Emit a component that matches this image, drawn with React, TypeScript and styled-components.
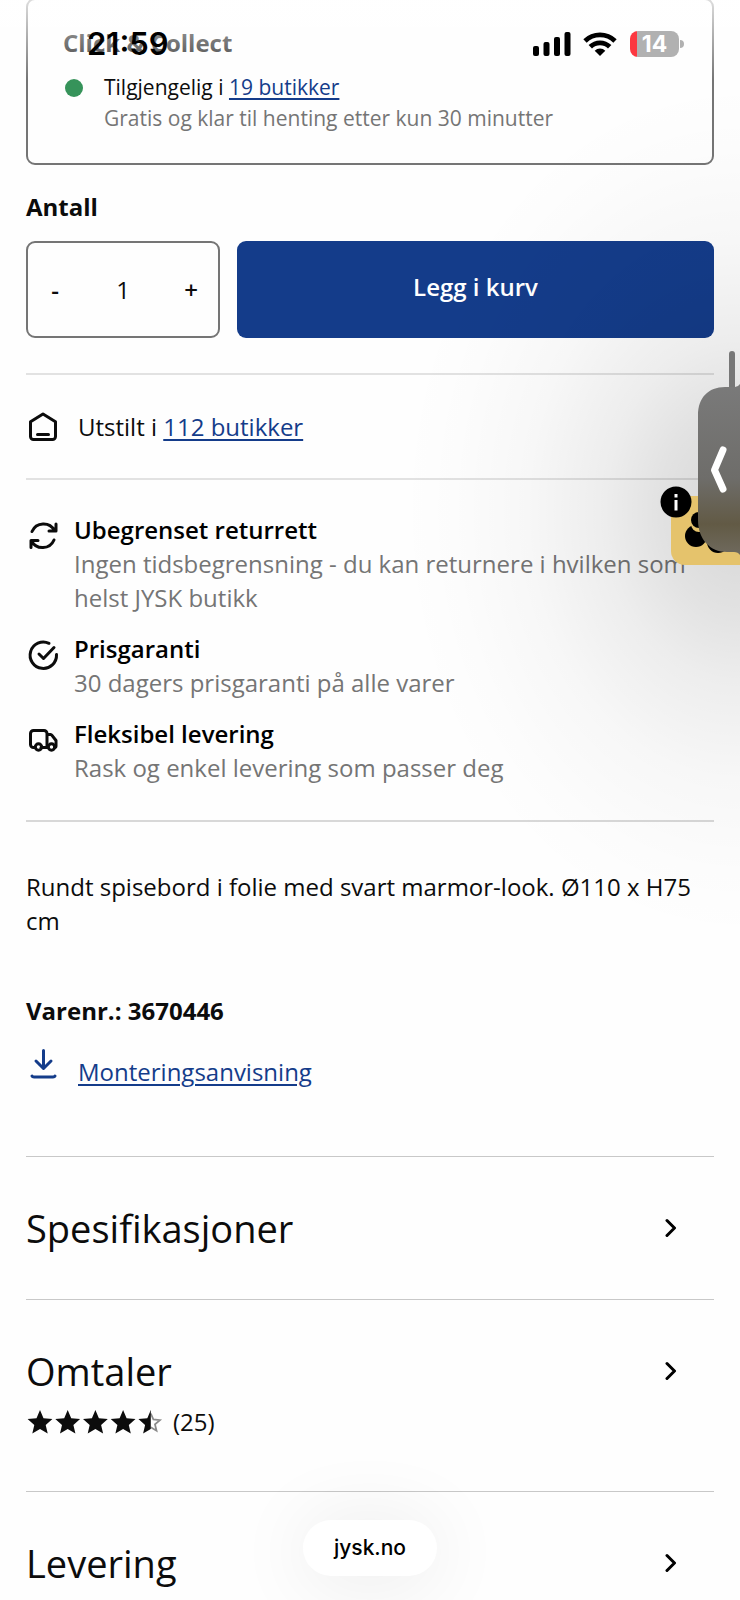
import React, { useState } from "react";
import styled, { createGlobalStyle } from "styled-components";

const GlobalStyle = createGlobalStyle`
  *, *::before, *::after { box-sizing: border-box; }
  html, body { margin: 0; padding: 0; background: #fefefe; }
  body { font-family: "Open Sans", "Noto Sans", sans-serif; font-size: 24px; line-height: 34px; color: #0c0c0c; }
  h2, p, ul { margin: 0; padding: 0; }
  button, input { font: inherit; color: inherit; }
`;

const BLUE = "#143c8a";
const GREY = "#757575";

const Page = styled.div`
  position: relative;
  min-height: 100vh;
  overflow: hidden;
`;

const Content = styled.main`
  display: flex;
  flex-direction: column;
  padding: 0 26px;
`;

const CollectCard = styled.section`
  margin-top: -2px;
  padding: 26px 35px 29px;
  border: 2px solid #757575;
  border-radius: 9px;
  font-size: 21px;
  line-height: 31px;
`;

const CardTitle = styled.h2`
  font-size: 24px;
  line-height: 34px;
  font-weight: 700;
  color: #2c2c2c;
`;

const StockRow = styled.div`
  display: grid;
  grid-template-columns: 41px 1fr;
  margin-top: 12px;
`;

const StockDot = styled.span`
  width: 18px;
  height: 18px;
  margin: 7px 0 0 2px;
  border-radius: 50%;
  background: #36935a;
`;

const Muted = styled.p`
  color: ${GREY};
`;

const TextLink = styled.a`
  color: ${BLUE};
  text-decoration: underline;
  text-decoration-thickness: 2px;
  text-underline-offset: 3px;
`;

const QuantityLabel = styled.label`
  margin-top: 25px;
  font-weight: 700;
`;

const BuyRow = styled.div`
  display: flex;
  gap: 17px;
  margin: 17px 0 35px;
`;

const Stepper = styled.div`
  display: flex;
  align-items: stretch;
  flex: 0 0 194px;
  min-width: 0;
  height: 97px;
  border: 2px solid #757575;
  border-radius: 9px;
`;

const StepButton = styled.button`
  flex: 0 0 54px;
  padding: 0;
  border: 0;
  background: none;
  font-weight: 600;
  cursor: pointer;
`;

const QuantityInput = styled.input`
  flex: 1;
  width: 0;
  min-width: 0;
  padding: 0;
  border: 0;
  background: none;
  text-align: center;
`;

const AddButton = styled.button`
  flex: 1;
  padding: 0 0 6px;
  border: 0;
  border-radius: 9px;
  background: ${BLUE};
  color: #fff;
  font-weight: 600;
  cursor: pointer;
`;

const Divided = styled.section`
  border-top: 2px solid #e2e2e2;
`;

const IconRow = styled(Divided)`
  display: flex;
  align-items: center;
  gap: 18px;
  padding: 35px 0 34px;
`;

const Icon = styled.svg`
  flex: none;
  width: 34px;
  height: 34px;
  fill: none;
  stroke: currentColor;
  stroke-width: 3;
  stroke-linecap: round;
  stroke-linejoin: round;
`;

const FeatureList = styled.ul`
  display: flex;
  flex-direction: column;
  gap: 17px;
  padding: 33px 0 35px;
  border-top: 2px solid #e2e2e2;
  list-style: none;
`;

const Feature = styled.li`
  display: grid;
  grid-template-columns: 34px 1fr;
  column-gap: 14px;

  ${Icon} { margin-top: 6px; }
`;

const FeatureTitle = styled.h2`
  font-size: 24px;
  line-height: 34px;
  font-weight: 600;
  color: #000;
`;

const Description = styled(Divided)`
  padding: 48px 0 67px;
  border-color: #d8d8d8;
`;

const ItemNumber = styled.p`
  margin-top: 56px;
  font-weight: 700;
`;

const DownloadRow = styled.div`
  display: flex;
  gap: 18px;
  align-items: flex-end;
  margin-top: 19px;
  color: ${BLUE};

  ${Icon} { margin-bottom: 8px; }
`;

const AccordionItem = styled.section`
  padding: 45px 0;
  border-top: 1px solid #c8c8c8;

  &:last-child { padding-bottom: 0; }
`;

const AccordionButton = styled.button`
  display: flex;
  align-items: center;
  justify-content: space-between;
  width: 100%;
  padding: 0 37px 0 0;
  border: 0;
  background: none;
  font-size: 38px;
  line-height: 52px;
  text-align: left;
  cursor: pointer;
`;

const Chevron = styled.svg`
  width: 12px;
  height: 20px;
  fill: none;
  stroke: #000;
  stroke-width: 3;
  stroke-linecap: round;
  stroke-linejoin: round;
`;

const Rating = styled.div`
  display: flex;
  align-items: center;
  gap: 8px;
  height: 49px;
  font-weight: 500;
`;

const Stars = styled.svg`
  width: 139px;
  height: 28px;
`;

const Overlay = styled.div`
  position: absolute;
  inset: 0;
  overflow: hidden;
  pointer-events: none;
`;

const StatusBar = styled.header`
  display: flex;
  align-items: flex-start;
  justify-content: space-between;
  height: 80px;
  padding: 26px 56px 0 87px;
  background: linear-gradient(rgba(255, 255, 255, 0.75), rgba(255, 255, 255, 0.3) 60%, rgba(255, 255, 255, 0));
  color: #000;
  font-family: Inter, sans-serif;
  font-size: 31px;
  line-height: 36px;
  font-weight: 600;
`;

const StatusIcons = styled.div`
  display: flex;
  align-items: center;
  gap: 12px;
  height: 36px;
`;

const Battery = styled.div`
  position: relative;
  width: 49px;
  height: 26px;
  margin: 0 5px 0 1px;
  border-radius: 8px;
  background: linear-gradient(90deg, #fc3840 7px, #b1b1b1 7px);
  color: #fff;
  font-size: 23px;
  line-height: 26px;
  font-weight: 700;
  text-align: center;

  &::after {
    content: "";
    position: absolute;
    top: 9px;
    right: -5px;
    width: 4px;
    height: 8px;
    border-radius: 0 4px 4px 0;
    background: #b1b1b1;
  }
`;

const EdgeShade = styled.div`
  position: absolute;
  top: 80px;
  right: 0;
  width: 340px;
  height: 860px;
  background: radial-gradient(
    340px 430px at 100% 50%,
    rgba(0, 0, 0, 0.16),
    rgba(0, 0, 0, 0.11) 24%,
    rgba(0, 0, 0, 0.068) 40%,
    rgba(0, 0, 0, 0.027) 63%,
    rgba(0, 0, 0, 0.008) 85%,
    transparent
  );
`;

const ScrollThumb = styled.div`
  position: absolute;
  top: 351px;
  right: 5px;
  width: 6px;
  height: 90px;
  border-radius: 3px;
  background: #777;
`;

const CookieBadge = styled.button`
  position: absolute;
  top: 486px;
  right: 0;
  width: 80px;
  height: 80px;
  padding: 0;
  border: 0;
  background: none;
  pointer-events: auto;

  svg { display: block; }
`;

const EdgeTab = styled.button`
  position: absolute;
  top: 384px;
  right: 0;
  width: 42px;
  height: 171px;
  padding: 0;
  border: 0;
  background: none;
  pointer-events: auto;

  svg { display: block; }
`;

const AddressPill = styled.button`
  position: absolute;
  bottom: 24px;
  left: 50%;
  transform: translateX(-50%);
  height: 56px;
  padding: 0 31px;
  border: 0;
  border-radius: 28px;
  background: #fff;
  box-shadow: 0 4px 80px rgba(0, 0, 0, 0.09);
  color: #000;
  font-family: Inter, sans-serif;
  font-size: 21px;
  font-weight: 500;
  pointer-events: auto;
`;

const STAR = "M14 2l3.5 8.2 8.9.8-6.7 5.9 2 8.7L14 21l-7.7 4.6 2-8.7L1.600 11l8.900-.8z";

function ChevronRight() {
  return (
    <Chevron viewBox="0 0 12 20" aria-hidden="true">
      <path d="M2 2.500l7.500 7.500L2 17.500" />
    </Chevron>
  );
}

function RatingStars() {
  return (
    <Stars viewBox="0 0 139 28" role="img" aria-label="4,5 av 5 stjerner">
      <defs>
        <clipPath id="half-star"><rect width="14" height="28" /></clipPath>
      </defs>
      {[0, 1, 2, 3].map((i) => (
        <path key={i} d={STAR} transform={`translate(${i * 27.700} 0)`} fill="#0c0c0c" />
      ))}
      <g transform="translate(110.800 0)">
        <path d="M14 5.500l2.600 6 6.500.6-4.900 4.300 1.500 6.300L14 19.300" fill="none" stroke="#8a8a8a" strokeWidth="1.800" />
        <path d={STAR} fill="#0c0c0c" clipPath="url(#half-star)" />
      </g>
    </Stars>
  );
}

export default function App() {
  const [quantity, setQuantity] = useState("1");
  const step = (by: number) => setQuantity(String(Math.max(1, (Number(quantity) || 1) + by)));

  return (
    <Page>
      <GlobalStyle />
      <Content>
        <CollectCard>
          <CardTitle>Click &amp; Collect</CardTitle>
          <StockRow>
            <StockDot />
            <div>
              <p>Tilgjengelig i <TextLink href="#butikker">19 butikker</TextLink></p>
              <Muted>Gratis og klar til henting etter kun 30 minutter</Muted>
            </div>
          </StockRow>
        </CollectCard>

        <QuantityLabel htmlFor="antall">Antall</QuantityLabel>
        <BuyRow>
          <Stepper>
            <StepButton type="button" aria-label="Færre" onClick={() => step(-1)}>-</StepButton>
            <QuantityInput id="antall" inputMode="numeric" value={quantity} onChange={(e) => setQuantity(e.target.value)} />
            <StepButton type="button" aria-label="Flere" onClick={() => step(1)}>+</StepButton>
          </Stepper>
          <AddButton type="button">Legg i kurv</AddButton>
        </BuyRow>

        <IconRow>
          <Icon viewBox="0 0 34 34" aria-hidden="true">
            <path d="M4.500 11.800L17 4l12.500 7.800v14.700a3 3 0 0 1-3 3h-19a3 3 0 0 1-3-3zM11.500 24.500h11" />
          </Icon>
          <p>Utstilt i <TextLink href="#utstilt">112 butikker</TextLink></p>
        </IconRow>

        <FeatureList>
          <Feature>
            <Icon viewBox="0 0 34 34" aria-hidden="true">
              <path d="M6 12.500a12.500 12.500 0 0 1 22.500-1M30 5v7h-7M28 21a12.500 12.500 0 0 1-22.500 1M5 28.500v-7h7" />
            </Icon>
            <div>
              <FeatureTitle>Ubegrenset returrett</FeatureTitle>
              <Muted>Ingen tidsbegrensning - du kan returnere i hvilken som helst JYSK butikk</Muted>
            </div>
          </Feature>
          <Feature>
            <Icon viewBox="0 0 34 34" aria-hidden="true">
              <path d="M23 5.300A13.200 13.200 0 1 0 30.500 16.500M13 16l4.500 4.500L28 9.500" />
            </Icon>
            <div>
              <FeatureTitle>Prisgaranti</FeatureTitle>
              <Muted>30 dagers prisgaranti på alle varer</Muted>
            </div>
          </Feature>
          <Feature>
            <Icon viewBox="0 0 34 34" aria-hidden="true">
              <path d="M8 24.500H7.500a3 3 0 0 1-3-3V10.500a3 3 0 0 1 3-3h10.500a3 3 0 0 1 3 3v14h-6M21 11.500h3.500a2 2 0 0 1 1.500.8l4 5.200v5.500a1.500 1.500 0 0 1-1.500 1.500" />
              <circle cx="12.500" cy="24" r="3.200" />
              <circle cx="25.500" cy="24" r="3.200" />
            </Icon>
            <div>
              <FeatureTitle>Fleksibel levering</FeatureTitle>
              <Muted>Rask og enkel levering som passer deg</Muted>
            </div>
          </Feature>
        </FeatureList>

        <Description>
          <p>Rundt spisebord i folie med svart marmor-look. Ø110 x H75 cm</p>
          <ItemNumber>Varenr.: 3670446</ItemNumber>
          <DownloadRow>
            <Icon viewBox="0 0 34 34" aria-hidden="true">
              <path d="M17.500 3.500v17.500M10 14l7.500 7.500L25 14M6 29q.5 1 2 1h19q1.500 0 2-1" />
            </Icon>
            <TextLink href="#monteringsanvisning">Monteringsanvisning</TextLink>
          </DownloadRow>
        </Description>

        <AccordionItem>
          <AccordionButton type="button">Spesifikasjoner<ChevronRight /></AccordionButton>
        </AccordionItem>
        <AccordionItem>
          <AccordionButton type="button">Omtaler<ChevronRight /></AccordionButton>
          <Rating><RatingStars />(25)</Rating>
        </AccordionItem>
        <AccordionItem>
          <AccordionButton type="button">Levering<ChevronRight /></AccordionButton>
        </AccordionItem>
      </Content>

      <Overlay>
        <StatusBar>
          <span>21:59</span>
          <StatusIcons>
            <svg width="38" height="24" viewBox="0 0 38 24" aria-hidden="true">
              <rect x="0" y="14" width="6" height="10" rx="2" />
              <rect x="10.500" y="10" width="6" height="14" rx="2" />
              <rect x="21" y="5" width="6" height="19" rx="2" />
              <rect x="31.500" y="0" width="6" height="24" rx="2" />
            </svg>
            <svg width="34" height="24" viewBox="0 0 34 24" fill="none" stroke="#000" strokeWidth="4.800" aria-hidden="true">
              <path d="M2 9a21.500 21.500 0 0 1 30 0" />
              <path d="M7.300 14.800a13.800 13.800 0 0 1 19.400 0" />
              <path d="M17 24l-5.300-5.300a7.500 7.500 0 0 1 10.600 0z" fill="#000" stroke="none" />
            </svg>
            <Battery>14</Battery>
          </StatusIcons>
        </StatusBar>
        <EdgeShade />
        <ScrollThumb />
        <CookieBadge type="button" aria-label="Informasjonskapsler">
          <svg width="80" height="80" viewBox="0 0 80 80" aria-hidden="true">
            <path d="M11 10h69v69H25a14 14 0 0 1-14-14z" fill="#e5c36c" />
            <circle cx="36" cy="50" r="11" />
            <circle cx="39" cy="38" r="8" fill="#e5c36c" />
            <circle cx="39" cy="34" r="8" />
            <circle cx="58" cy="56" r="11" />
            <circle cx="16" cy="16" r="15.500" />
            <path d="M16 14v10.500M16 8v3.500" stroke="#fff" strokeWidth="3" />
          </svg>
        </CookieBadge>
        <EdgeTab type="button" aria-label="Åpne panel">
          <svg width="42" height="171" viewBox="0 0 42 171" fill="none" aria-hidden="true">
            <defs>
              <linearGradient id="tab-fill" x1="0" y1="0" x2="0" y2="1">
                <stop offset="0" stopColor="#7a7a7a" />
                <stop offset="0.550" stopColor="#6e6d6a" />
                <stop offset="0.820" stopColor="#625a45" />
                <stop offset="1" stopColor="#6f6a5e" />
              </linearGradient>
            </defs>
            <path d="M42 0q-2 3-5 3H27C10 3 0 14 0 31v105c0 19 12 32 29 32h7q4 0 6 3z" fill="url(#tab-fill)" />
            <path d="M25 66L16.500 86l8.500 19" stroke="#fff" strokeWidth="7" strokeLinecap="round" strokeLinejoin="round" />
          </svg>
        </EdgeTab>
        <AddressPill type="button">jysk.no</AddressPill>
      </Overlay>
    </Page>
  );
}
